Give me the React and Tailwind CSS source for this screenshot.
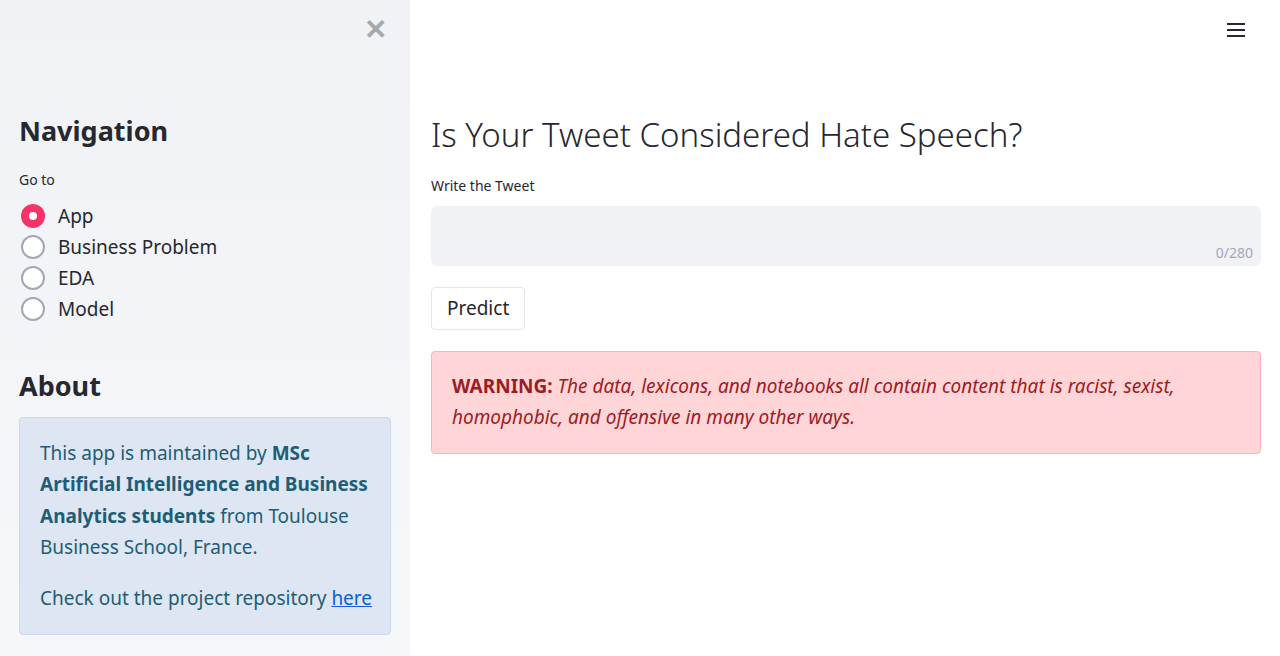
import { useState } from 'react';

const font = { fontFamily: '"Noto Sans", "Liberation Sans", sans-serif' };

function Radio({ label, checked, onClick }) {
  return (
    <button onClick={onClick} className="flex items-center h-[31px] text-left">
      {checked ? (
        <span className="w-[24px] h-[24px] rounded-full bg-[#f63366] flex items-center justify-center ml-[2px]">
          <span className="w-[8px] h-[8px] rounded-full bg-white" />
        </span>
      ) : (
        <span className="w-[24px] h-[24px] rounded-full bg-white border-2 border-[#a3a8b4] ml-[2px]" />
      )}
      <span className="ml-[13px] text-[19px] text-[#262730]">{label}</span>
    </button>
  );
}

export default function App() {
  const [page, setPage] = useState('App');
  const [tweet, setTweet] = useState('');

  return (
    <div className="flex h-[656px] w-full overflow-hidden bg-white" style={font}>
      {/* ── Sidebar ───────────────────────────────────────────── */}
      <aside className="w-[410px] shrink-0 bg-gradient-to-b from-[#f0f2f6] to-[#f6f7f9] flex flex-col px-[19px]">
        <div className="flex justify-end h-[100px] pt-[14px] pr-[4px]">
          <span className="text-[#a8a8a8] text-[28px] leading-none font-bold">✕</span>
        </div>

        <h2 className="text-[27px] font-bold text-[#262730] leading-[1.2] mt-[15px]">Navigation</h2>
        <p className="text-[14px] text-[#262730] mt-[22px]">Go to</p>
        <div className="flex flex-col mt-[10px]">
          {['App', 'Business Problem', 'EDA', 'Model'].map((p) => (
            <Radio key={p} label={p} checked={page === p} onClick={() => setPage(p)} />
          ))}
        </div>

        <h2 className="text-[27px] font-bold text-[#262730] leading-[1.2] mt-[46px]">About</h2>
        <div className="mt-[14px] bg-[#dde6f2] border border-[#c7d7ec] rounded-[4px] pl-[20px] pr-[12px] py-[20px] text-[19px] leading-[31.5px] text-[#1d5d75]">
          <p>
            This app is maintained by{' '}
            <b className="font-bold">MSc Artificial Intelligence and Business Analytics students</b>{' '}
            from Toulouse Business School, France.
          </p>
          <p className="mt-[19px] whitespace-nowrap">
            Check out the project repository{' '}
            <a href="#" className="text-[#0b5ed7] underline">here</a>
          </p>
        </div>
      </aside>

      {/* ── Main ──────────────────────────────────────────────── */}
      <main className="flex-1 flex flex-col pl-[21px] pr-[19px]">
        <div className="flex justify-end h-[100px] pt-[20px] pr-[15px]">
          <svg width="20" height="20" viewBox="0 0 20 20" className="text-[#262730]">
            <rect x="1" y="3" width="18" height="2" fill="currentColor" />
            <rect x="1" y="9" width="18" height="2" fill="currentColor" />
            <rect x="1" y="15" width="18" height="2" fill="currentColor" />
          </svg>
        </div>

        <h1 className="text-[33px] font-light text-[#262730] leading-[1.2] mt-[15px]">
          Is Your Tweet Considered Hate Speech?
        </h1>

        <label className="text-[14px] text-[#262730] mt-[20px]">Write the Tweet</label>
        <div className="relative mt-[10px] h-[60px] bg-[#f0f2f6] rounded-[6px]">
          <textarea
            value={tweet}
            maxLength={280}
            onChange={(e) => setTweet(e.target.value)}
            className="w-full h-full bg-transparent resize-none outline-none px-[14px] py-[10px] text-[17px] text-[#262730]"
          />
          <span className="absolute right-[8px] bottom-[3px] text-[14px] text-[#a3a8b8]">
            {tweet.length}/280
          </span>
        </div>

        <div className="mt-[21px]">
          <button className="h-[43px] px-[15px] bg-white border border-[#e3e6ed] rounded-[4px] text-[19px] text-[#262730]">
            Predict
          </button>
        </div>

        <div className="mt-[21px] bg-[#ffd5d7] border border-[#ffb3b7] rounded-[4px] px-[20px] py-[19px] text-[19px] leading-[31.5px] text-[#9c1c24]">
          <b className="font-bold">WARNING:</b>{' '}
          <i>The data, lexicons, and notebooks all contain content that is racist, sexist, homophobic, and offensive in many other ways.</i>
        </div>
      </main>
    </div>
  );
}
